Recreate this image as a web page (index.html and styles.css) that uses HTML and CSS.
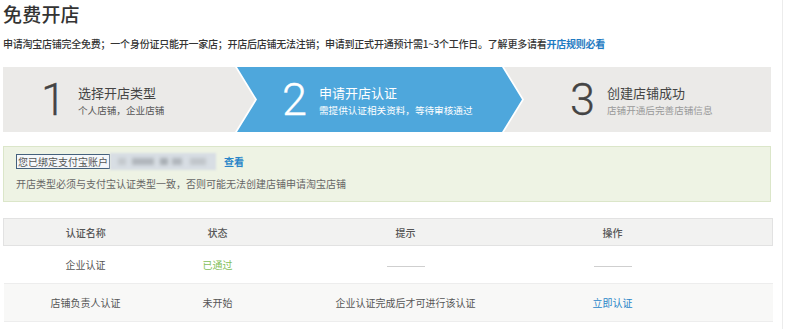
FILE: index.html
```html
<!DOCTYPE html>
<html lang="zh-CN">
<head>
<meta charset="utf-8">
<title>免费开店</title>
<link rel="stylesheet" href="styles.css">
</head>
<body>
<div class="page">
  <h1 class="title">免费开店</h1>
  <p class="notice">申请淘宝店铺完全免费；一个身份证只能开一家店；开店后店铺无法注销；申请到正式开通预计需1~3个工作日。了解更多请看<a class="notice-link" href="#">开店规则必看</a></p>

  <div class="steps">
    <div class="step step-1">
      <span class="step-num">1</span>
      <div class="step-text">
        <div class="step-title">选择开店类型</div>
        <div class="step-sub">个人店铺，企业店铺</div>
      </div>
    </div>
    <div class="step step-2 active">
      <span class="step-num">2</span>
      <div class="step-text">
        <div class="step-title">申请开店认证</div>
        <div class="step-sub">需提供认证相关资料，等待审核通过</div>
      </div>
    </div>
    <div class="step step-3">
      <span class="step-num">3</span>
      <div class="step-text">
        <div class="step-title">创建店铺成功</div>
        <div class="step-sub muted">店铺开通后完善店铺信息</div>
      </div>
    </div>
  </div>

  <div class="alert">
    <div class="alert-line">
      <span class="bound">您已绑定支付宝账户</span><span class="masked"><i class="blob b1"></i><i class="blob b2"></i><i class="blob b3"></i><i class="blob b4"></i><i class="blob b5"></i></span><a class="view-link" href="#">查看</a>
    </div>
    <div class="alert-tip">开店类型必须与支付宝认证类型一致，否则可能无法创建店铺申请淘宝店铺</div>
  </div>

  <table class="auth-table">
    <colgroup>
      <col class="c1"><col class="c2"><col class="c3"><col class="c4"><col class="c5">
    </colgroup>
    <thead>
      <tr><th>认证名称</th><th>状态</th><th>提示</th><th>操作</th><th></th></tr>
    </thead>
    <tbody>
      <tr>
        <td>企业认证</td>
        <td class="ok">已通过</td>
        <td><span class="dash"></span></td>
        <td><span class="dash"></span></td>
        <td></td>
      </tr>
      <tr class="alt">
        <td>店铺负责人认证</td>
        <td>未开始</td>
        <td>企业认证完成后才可进行该认证</td>
        <td><a class="act-link" href="#">立即认证</a></td>
        <td></td>
      </tr>
    </tbody>
  </table>
</div>
</body>
</html>
```

FILE: styles.css
```css
* { box-sizing: border-box; }

html, body {
  margin: 0;
  padding: 0;
  background: #fff;
}

body {
  font-family: "Noto Sans CJK SC", "Noto Sans", sans-serif;
  color: #333;
}

.page {
  width: 783px;
  height: 329px;
  padding: 0 11px 0 3px;
  border-right: 1px solid #ececec;
}

.title {
  margin: 0;
  font-size: 19px;
  line-height: 28px;
  font-weight: 500;
  color: #333;
  letter-spacing: 0.2px;
}

.notice {
  margin: 8px 0 0;
  font-size: 10px;
  line-height: 16px;
  color: #333;
  font-weight: 500;
  letter-spacing: -0.24px;
}

.notice-link {
  color: #1f7bc2;
  font-weight: 700;
  text-decoration: none;
}

/* steps */
.steps {
  display: flex;
  height: 65px;
  margin-top: 15px;
}

.step {
  display: flex;
  align-items: center;
  background: #ebeae8;
  color: #444;
}

.step-1 {
  width: 252px;
  padding-left: 38px;
  clip-path: polygon(0 0, calc(100% - 20px) 0, 100% 50%, calc(100% - 20px) 100%, 0 100%);
}

.step-2 {
  width: 285px;
  margin-left: -18px;
  padding-left: 45px;
  background: #4ea7dc;
  color: #fff;
  clip-path: polygon(0 0, calc(100% - 20px) 0, 100% 50%, calc(100% - 20px) 100%, 0 100%, 20px 50%);
}

.step-3 {
  flex: 1;
  margin-left: -18px;
  padding-left: 66px;
  clip-path: polygon(0 0, 100% 0, 100% 100%, 0 100%, 20px 50%);
}

.step-num {
  font-family: "Roboto", "Open Sans", sans-serif;
  font-weight: 300;
  font-size: 45px;
  line-height: 46px;
  width: 37px;
  color: #444;
  -webkit-text-stroke: 0.3px currentColor;
}

.step-2 .step-num { color: #fff; }

.step-text {
  display: flex;
  flex-direction: column;
  padding-top: 1px;
}

.step-title {
  font-size: 13px;
  line-height: 18px;
}

.step-sub {
  font-size: 9.6px;
  line-height: 14px;
  margin-top: 1px;
}

.step-1 .step-sub { color: #555; }
.step-sub.muted { color: #999; }

/* alert */
.alert {
  margin-top: 14px;
  height: 56px;
  border: 1px solid #dbe6c9;
  background: #eef3e4;
  padding: 6px 0 0 12px;
}

.alert-line {
  display: flex;
  align-items: center;
  height: 16px;
  font-size: 10px;
  color: #555;
}

.bound {
  display: inline-block;
  height: 15px;
  line-height: 13px;
  padding: 0 1px;
  border: 1px solid #44607c;
  background: #f4f7fa;
  color: #555;
}

.masked {
  position: relative;
  display: inline-block;
  width: 106px;
  height: 17px;
  background: #d8dee4;
  filter: blur(0.8px);
  overflow: hidden;
}

.blob {
  position: absolute;
  top: 5px;
  height: 7px;
  background: #b0b6bc;
  filter: blur(1.6px);
}
.b1 { left: 8px; width: 8px; background: #c3c8cd; }
.b2 { left: 22px; width: 22px; }
.b3 { left: 50px; width: 8px; background: #a7adb3; }
.b4 { left: 62px; width: 10px; }
.b5 { left: 80px; width: 16px; background: #c0c5ca; }

.view-link {
  margin-left: 8px;
  color: #2a86c8;
  font-weight: 700;
  text-decoration: none;
}

.alert-tip {
  margin-top: 7px;
  font-size: 10px;
  line-height: 16px;
  color: #666;
}

/* table */
.auth-table {
  margin-top: 16px;
  width: 769px;
  border-collapse: collapse;
  table-layout: fixed;
  font-size: 10px;
  color: #555;
}

.c1 { width: 164px; }
.c2 { width: 100px; }
.c3 { width: 276px; }
.c4 { width: 138px; }
.c5 { width: 91px; }

.auth-table th {
  height: 27px;
  padding: 0;
  background: #f2f2f1;
  border-top: 1px solid #e2e2e2;
  border-bottom: 1px solid #e2e2e2;
  font-weight: 500;
  color: #555;
}

.auth-table thead tr th:first-child { border-left: 1px solid #e2e2e2; }
.auth-table thead tr th:last-child { border-right: 1px solid #e2e2e2; }

.auth-table td {
  height: 38px;
  padding: 0;
  text-align: center;
  vertical-align: middle;
}

.auth-table tr.alt td {
  height: 38px;
  background: #f8f8f7;
  border-top: 1px solid #ededed;
  border-bottom: 1px solid #ededed;
}

.ok { color: #84bf5a; }

.dash {
  display: inline-block;
  width: 38px;
  height: 1px;
  background: #cfcfcf;
  vertical-align: middle;
}

.act-link {
  color: #2a86c8;
  text-decoration: none;
}
```
